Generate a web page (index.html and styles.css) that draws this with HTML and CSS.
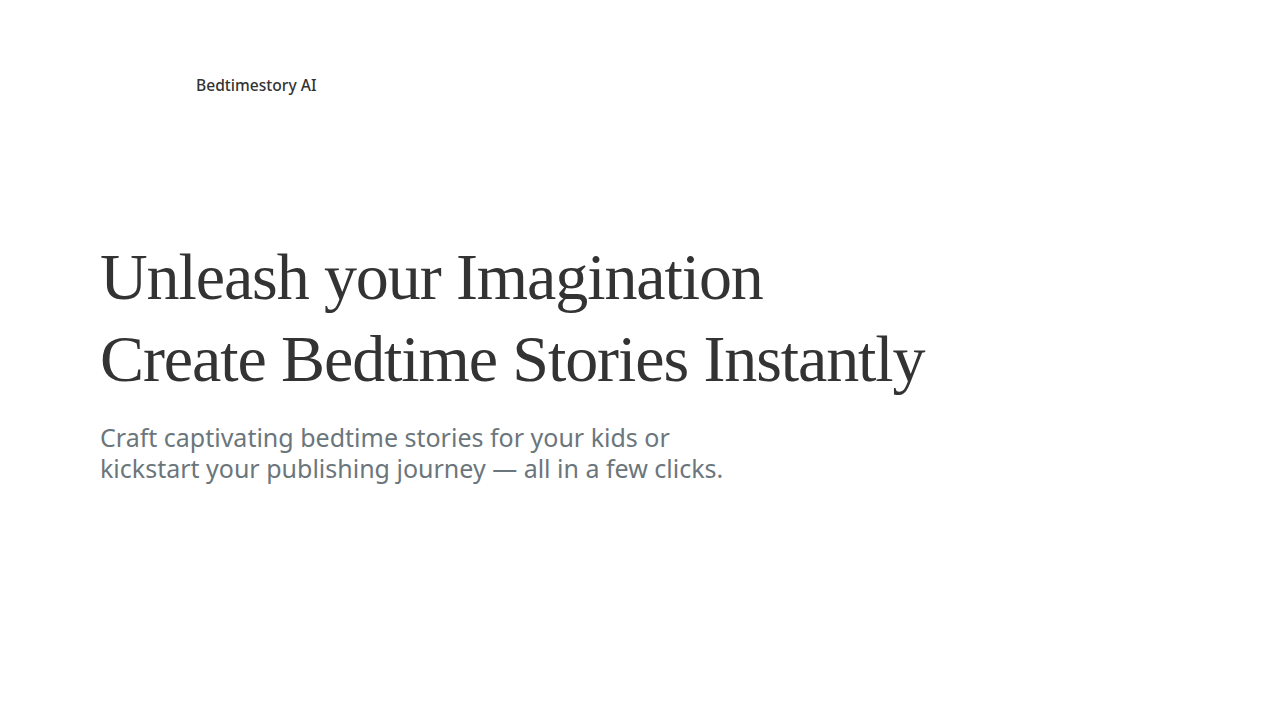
FILE: index.html
```html
<!DOCTYPE html>
<html lang="en">
<head>
<meta charset="utf-8">
<title>Bedtimestory AI</title>
<link rel="stylesheet" href="styles.css">
</head>
<body>
<header class="nav">
  <div class="brand">Bedtimestory AI</div>
</header>
<main class="hero">
  <h1 class="title"><span class="line">Unleash your Imagination</span><span class="line">Create Bedtime Stories Instantly</span></h1>
  <p class="lead">Craft captivating bedtime stories for your kids or<br>kickstart your publishing journey — all in a few clicks.</p>
</main>
</body>
</html>
```
FILE: styles.css
```css
* { box-sizing: border-box; }
html, body { margin: 0; padding: 0; background: #ffffff; }
body { width: 1280px; height: 720px; overflow: hidden; }
.nav {
  display: flex;
  align-items: center;
  height: 170px;
  padding: 0 0 0 196px;
}
.brand {
  font-family: "Noto Sans", "Open Sans", sans-serif;
  font-weight: 500;
  font-size: 15.6px;
  color: #333333;
}
.hero {
  padding: 66px 100px 0 100px;
}
.title {
  margin: 0;
  font-family: "Liberation Serif", "DejaVu Serif", serif;
  font-weight: 400;
  font-size: 66px;
  line-height: 82px;
  letter-spacing: -1.1px;
  color: #333333;
}
.line { display: block; white-space: nowrap; }
.lead {
  margin: 22px 0 0 0;
  font-family: "Noto Sans", "Open Sans", sans-serif;
  font-size: 25px;
  line-height: 31px;
  color: #6b767c;
}
```
